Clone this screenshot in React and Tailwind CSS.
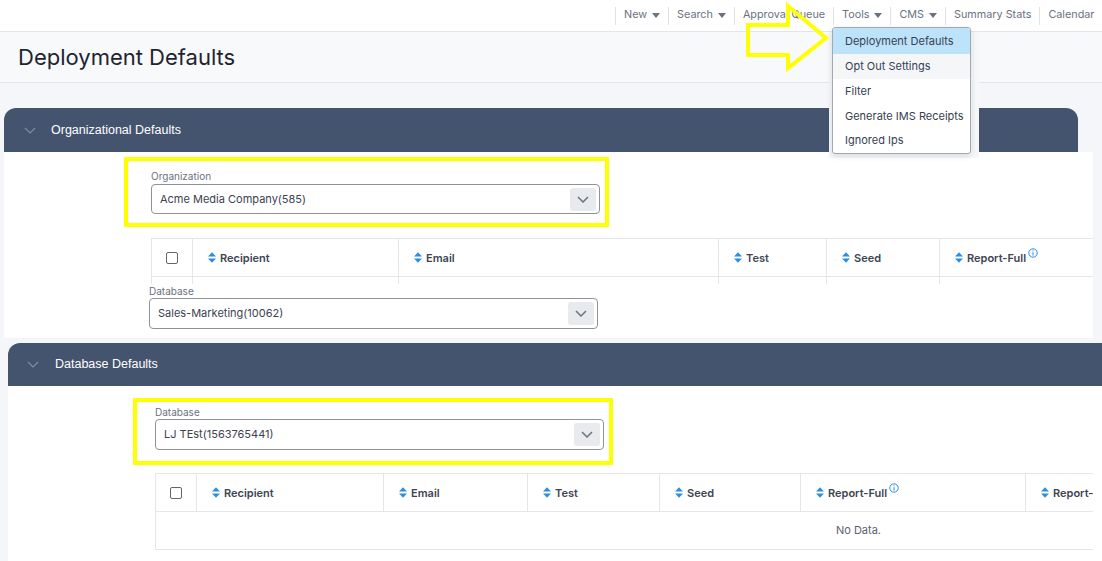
import React from "react";

const Caret = () => (
  <svg width="8" height="5" viewBox="0 0 8 5" className="ml-[5px] inline-block">
    <path d="M0 0 L8 0 L4 5 Z" fill="#6b7280" />
  </svg>
);

const NavItem = ({ label, caret }) => (
  <div className="flex items-center h-[18px] border-l border-[#dfe2e6] px-[8px] text-[10.8px] text-[#6b7280]">
    {label}
    {caret && <Caret />}
  </div>
);

const Sort = () => (
  <svg width="8" height="11" viewBox="0 0 8 11" className="mr-[4px] shrink-0">
    <path d="M0 4.6 L4 0.2 L8 4.6 Z" fill="#2d8ee0" />
    <path d="M0 6.4 L4 10.8 L8 6.4 Z" fill="#2d8ee0" />
  </svg>
);

const Info = () => (
  <svg width="10" height="10" viewBox="0 0 10 10" className="ml-[2px] mt-[-3px] shrink-0">
    <circle cx="5" cy="5" r="4.2" fill="none" stroke="#2d8ee0" strokeWidth="1" />
    <rect x="4.5" y="4.2" width="1" height="3.4" fill="#2d8ee0" />
    <rect x="4.5" y="2.3" width="1" height="1" fill="#2d8ee0" />
  </svg>
);

const Checkbox = () => (
  <div className="w-[12px] h-[12px] border-[1.5px] border-[#5f6670] rounded-[2px] bg-white" />
);

const PanelChevron = () => (
  <svg width="12" height="7" viewBox="0 0 12 7">
    <polyline points="1,1 6,6 11,1" fill="none" stroke="#7f8ca2" strokeWidth="1.2" />
  </svg>
);

const SelectBox = ({ value, h }) => (
  <div
    className={`flex items-center justify-between border border-[#8d939b] rounded-[4px] bg-white pl-[8px] pr-[3px] ${h}`}
  >
    <span className="text-[11px] text-[#3b4250]">{value}</span>
    <div className="w-[26px] h-[23px] bg-[#e8eaed] rounded-[3px] flex items-center justify-center">
      <svg width="12" height="7" viewBox="0 0 12 7">
        <polyline points="1,1 6,6 11,1" fill="none" stroke="#6b7280" strokeWidth="1.5" />
      </svg>
    </div>
  </div>
);

const HeadCell = ({ w, children, last, check }) => (
  <div
    className={`h-full flex items-center shrink-0 ${last ? "" : "border-r border-[#e4e6e9]"} ${
      check ? "justify-center" : "pl-[15px]"
    }`}
    style={{ width: w }}
  >
    {children}
  </div>
);

const HeadLabel = ({ t, info }) => (
  <div className="flex items-start">
    <span className="text-[11px] leading-[14px] font-semibold text-[#3d4553] whitespace-nowrap">{t}</span>
    {info && <Info />}
  </div>
);

export default function App() {
  const cols1 = [
    { w: 206, t: "Recipient" },
    { w: 320, t: "Email" },
    { w: 108, t: "Test" },
    { w: 113, t: "Seed" },
    { w: 152, t: "Report-Full", info: true },
  ];
  const cols2 = [
    { w: 187, t: "Recipient" },
    { w: 144, t: "Email" },
    { w: 132, t: "Test" },
    { w: 141, t: "Seed" },
    { w: 225, t: "Report-Full", info: true },
    { w: 68, t: "Report-" },
  ];

  return (
    <div
      className="relative w-[1102px] h-[561px] overflow-hidden bg-[#f5f6fa] flex flex-col"
      style={{ fontFamily: "Inter, 'Noto Sans', sans-serif" }}
    >
      {/* Top nav */}
      <nav className="h-[32px] shrink-0 bg-white border-b border-[#e3e5e8] flex items-center pl-[615px] whitespace-nowrap overflow-hidden">
        <NavItem label="New" caret />
        <NavItem label="Search" caret />
        <NavItem label="Approval Queue" />
        <NavItem label="Tools" caret />
        <NavItem label="CMS" caret />
        <NavItem label="Summary Stats" />
        <NavItem label="Calendar" />
      </nav>

      {/* Header */}
      <header className="h-[51px] shrink-0 bg-[#f8f9fb] border-b border-[#e3e5e8] flex items-center pl-[18px]">
        <h1 className="text-[22px] text-[#1f2430] leading-none">Deployment Defaults</h1>
      </header>

      {/* Organizational Defaults */}
      <section className="mt-[25px] ml-[4px] shrink-0">
        <div className="w-[1074px] h-[44px] bg-[#44546f] rounded-t-[12px] flex items-center pl-[20px]">
          <PanelChevron />
          <span
            className="ml-[15px] text-[12.5px] text-white"
            style={{ fontFamily: "'Liberation Sans', Arial, sans-serif" }}
          >
            Organizational Defaults
          </span>
        </div>
        <div className="bg-white w-[1089px] h-[132px] pt-[5px] overflow-hidden">
          <div className="ml-[120px] w-[485px] h-[70px] border-4 border-[#ffff00] pl-[23px] pr-[5px] pt-[9px]">
            <div className="text-[10px] leading-[12px] text-[#6b7280]">Organization</div>
            <div className="mt-[2px]">
              <SelectBox value="Acme Media Company(585)" h="h-[30px]" />
            </div>
          </div>
          <div className="ml-[147px] mt-[11px] w-[942px] border-t border-l border-[#e4e6e9]">
            <div className="h-[38px] flex border-b border-[#e4e6e9]">
              <HeadCell w={41} check>
                <Checkbox />
              </HeadCell>
              {cols1.map((c, i) => (
                <HeadCell key={c.t} w={c.w} last={i === cols1.length - 1}>
                  <Sort />
                  <HeadLabel t={c.t} info={c.info} />
                </HeadCell>
              ))}
            </div>
            <div className="h-[12px] flex">
              <div className="w-[41px] border-r border-[#e4e6e9]" />
              {cols1.map((c, i) => (
                <div
                  key={c.t}
                  className={i === cols1.length - 1 ? "" : "border-r border-[#e4e6e9]"}
                  style={{ width: c.w }}
                />
              ))}
            </div>
          </div>
        </div>
      </section>

      {/* Database patch */}
      <div className="ml-[4px] w-[1089px] h-[54px] shrink-0 bg-white pl-[145px]">
        <div className="w-[449px]">
          <div className="text-[10px] leading-[12px] text-[#6b7280] pt-[1px]">Database</div>
          <div className="mt-[1px]">
            <SelectBox value="Sales-Marketing(10062)" h="h-[31px]" />
          </div>
        </div>
      </div>

      {/* Database Defaults */}
      <section className="mt-[5px] ml-[8px] w-[1094px] flex-1 flex flex-col">
        <div className="h-[43px] shrink-0 bg-[#44546f] rounded-tl-[12px] flex items-center pl-[19px]">
          <PanelChevron />
          <span
            className="ml-[16px] text-[12.5px] text-white"
            style={{ fontFamily: "'Liberation Sans', Arial, sans-serif" }}
          >
            Database Defaults
          </span>
        </div>
        <div className="bg-white flex-1 pt-[12px]">
          <div className="ml-[125px] w-[480px] h-[67px] border-4 border-[#ffff00] pl-[18px] pr-[5px] pt-[4px]">
            <div className="text-[10px] leading-[12px] text-[#6b7280]">Database</div>
            <div className="mt-[1px]">
              <SelectBox value="LJ TEst(1563765441)" h="h-[31px]" />
            </div>
          </div>
          <div className="ml-[147px] mt-[8px] w-[938px] border-y border-l border-[#e4e6e9]">
            <div className="h-[38px] flex border-b border-[#e4e6e9]">
              <HeadCell w={41} check>
                <Checkbox />
              </HeadCell>
              {cols2.map((c, i) => (
                <HeadCell key={c.t} w={c.w} last={i === cols2.length - 1}>
                  <Sort />
                  <HeadLabel t={c.t} info={c.info} />
                </HeadCell>
              ))}
            </div>
            <div className="h-[37px] flex items-center justify-center pl-[468px] text-[11px] text-[#5b6270]">
              No Data.
            </div>
          </div>
        </div>
      </section>

      {/* Patch behind dropdown */}
      <div className="absolute left-[829px] top-[32px] w-[150px] h-[126px] bg-[#f6f7f9]" />

      {/* Tools dropdown */}
      <div className="absolute left-[832px] top-[27px] w-[139px] h-[127px] bg-white border border-[#a3a9b2] rounded-[3px] shadow-[0_2px_6px_rgba(0,0,0,0.12)] overflow-hidden flex flex-col text-[11px] text-[#364152]">
        <div className="h-[26px] bg-[#bde3fa] flex items-center pl-[12px]">Deployment Defaults</div>
        <div className="h-[25px] bg-[#f5f6f8] flex items-center pl-[12px]">Opt Out Settings</div>
        <div className="h-[25px] flex items-center pl-[12px]">Filter</div>
        <div className="h-[25px] flex items-center pl-[12px]">Generate IMS Receipts</div>
        <div className="h-[25px] flex items-center pl-[12px]">Ignored Ips</div>
      </div>

      {/* Yellow arrow */}
      <svg className="absolute left-0 top-0 pointer-events-none" width="1102" height="561">
        <polygon
          points="748,25 788,25 788,6 826,38 788,68 788,55 748,55"
          fill="none"
          stroke="#ffff00"
          strokeWidth="4"
          strokeLinejoin="miter"
        />
      </svg>
    </div>
  );
}
